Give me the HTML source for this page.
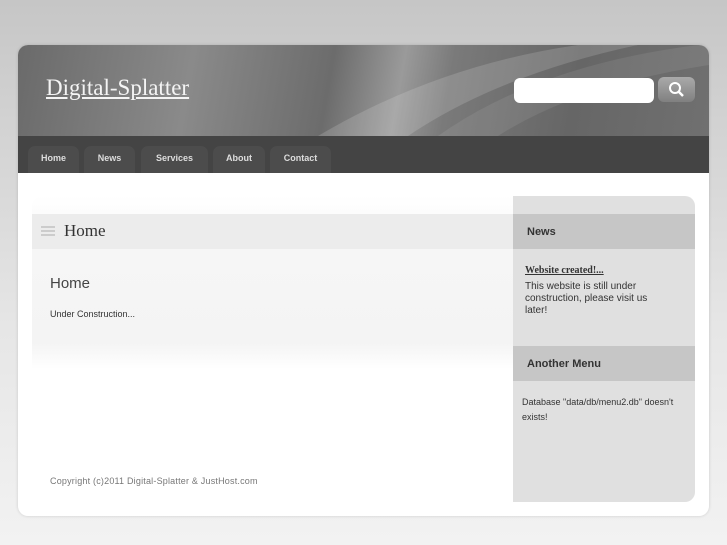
<!DOCTYPE html>
<html><head><style>
*{margin:0;padding:0;box-sizing:border-box}
body{width:727px;height:545px;overflow:hidden;background:linear-gradient(#c6c6c6,#e6e6e6 60%,#f2f2f2);font-family:"Liberation Sans",sans-serif;position:relative}
#wrap{position:absolute;left:18px;top:45px;width:691px;height:471px;background:#fff;border-radius:10px;box-shadow:0 0 3px rgba(0,0,0,.15);overflow:hidden}
#head{position:absolute;left:0;top:0;width:691px;height:91px;background:linear-gradient(100deg,#6a6a6a 0%,#8a8a8a 25%,#6c6c6c 45%,#9a9a9a 55%,#7a7a7a 62%,#666 80%,#707070 100%);overflow:hidden}
#logo{position:absolute;left:28px;top:30px;font-family:"Liberation Serif",serif;font-size:23px;color:#f4f4f4;text-decoration:underline}
#search{position:absolute;left:496px;top:33px;width:140px;height:25px;background:#fff;border-radius:6px}
#sbtn{position:absolute;left:640px;top:32px;width:37px;height:25px;background:linear-gradient(#aaa,#808080);border-radius:6px}
#nav{position:absolute;left:0;top:91px;width:691px;height:37px;background:#444}
.t{position:absolute;top:10px;height:27px;background:#4c4c4c;border-radius:7px 7px 0 0;color:#ddd;font-size:9px;font-weight:bold;text-align:center;line-height:25px}
#box{position:absolute;left:14px;top:151px;width:663px;height:306px;border-radius:10px;overflow:hidden;background:#fff}
#main{position:absolute;left:0;top:0;width:481px;height:173px;background:linear-gradient(#fff,#f6f6f6 30%,#f4f4f4 85%,#fff)}
#mh{position:absolute;left:0;top:18px;width:481px;height:35px;background:#ececec}
#side{position:absolute;left:481px;top:0;width:182px;height:306px;background:#e0e0e0}
.sh{position:absolute;left:0;width:182px;height:35px;background:#c6c6c6;font-weight:bold;font-size:11px;color:#333;padding:12px 0 0 14px}
</style></head><body>
<div id="wrap">
<div id="head">
<svg width="691" height="91" style="position:absolute;left:0;top:0"><path d="M300 91 Q420 20 560 0 L620 0 Q480 30 390 91Z" fill="rgba(255,255,255,.15)"/><path d="M420 91 Q520 20 680 0 L691 0 L691 20 Q560 40 480 91Z" fill="rgba(255,255,255,.08)"/></svg>
<div id="logo">Digital-Splatter</div>
<div id="search"></div>
<div id="sbtn"><svg width="37" height="25"><circle cx="17" cy="11" r="5" stroke="#fff" stroke-width="2" fill="none"/><path d="M20.5 14.5 L25 19" stroke="#fff" stroke-width="2.5"/></svg></div>
</div>
<div id="nav">
<div class="t" style="left:10px;width:51px">Home</div>
<div class="t" style="left:66px;width:51px">News</div>
<div class="t" style="left:123px;width:67px">Services</div>
<div class="t" style="left:195px;width:52px">About</div>
<div class="t" style="left:252px;width:61px">Contact</div>
</div>
<div id="box">
<div id="main"></div>
<div id="mh"><div style="position:absolute;left:9px;top:12px;width:14px;height:10px;background:repeating-linear-gradient(#ccc 0 2px,transparent 2px 4px)"></div><div style="position:absolute;left:32px;top:7px;font-family:'Liberation Serif',serif;font-size:17px;color:#333">Home</div></div>
<div style="position:absolute;left:18px;top:79px;font-size:15px;color:#444">Home</div>
<div style="position:absolute;left:18px;top:113px;font-size:9px;color:#333">Under Construction...</div>
<div style="position:absolute;left:18px;top:280px;font-size:9px;letter-spacing:.2px;color:#777">Copyright (c)2011 Digital-Splatter &amp; JustHost.com</div>
<div id="side">
<div class="sh" style="top:18px">News</div>
<div style="position:absolute;left:12px;top:69px;font-family:'Liberation Serif',serif;font-size:10px;font-weight:bold;color:#333;text-decoration:underline">Website created!...</div>
<div style="position:absolute;left:12px;top:85px;width:140px;font-size:10px;line-height:12px;color:#333">This website is still under construction, please visit us later!</div>
<div class="sh" style="top:150px">Another Menu</div>
<div style="position:absolute;left:9px;top:199px;width:170px;font-size:9px;line-height:15px;color:#333">Database "data/db/menu2.db" doesn't exists!</div>
</div>
</div>
</div>
</body></html>
